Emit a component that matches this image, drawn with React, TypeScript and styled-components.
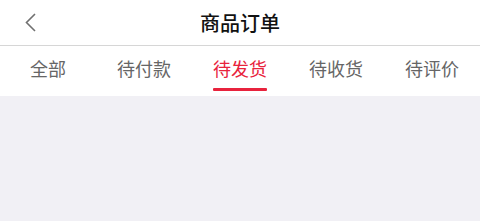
import React, { useState } from "react";
import styled, { createGlobalStyle } from "styled-components";

const Global = createGlobalStyle`
  html, body { margin: 0; padding: 0; background: #f1f0f5; }
  body { font-family: "Noto Sans CJK SC", "Noto Sans", sans-serif; }
`;

const Page = styled.div`
  width: 480px;
  min-height: 221px;
  background: #f1f0f5;
`;

const NavBar = styled.header`
  height: 45px;
  display: grid;
  grid-template-columns: 64px 1fr 64px;
  align-items: center;
  background: #fff;
  border-bottom: 1px solid #d6d6d6;
`;

const BackButton = styled.button`
  border: 0;
  background: none;
  padding: 0 0 0 24px;
  height: 45px;
  display: flex;
  align-items: center;
  color: #666;
`;

const Title = styled.h1`
  margin: 0;
  text-align: center;
  font-size: 20px;
  font-weight: 500;
  color: #111;
  line-height: 40px;
`;

const Tabs = styled.nav`
  height: 50px;
  display: grid;
  grid-template-columns: repeat(5, 1fr);
  background: #fff;
`;

const Tab = styled.div<{ $active: boolean }>`
  position: relative;
  display: flex;
  justify-content: center;
  align-items: flex-start;
  padding-top: 9px;
  font-size: 18px;
  line-height: 26px;
  color: ${(p) => (p.$active ? "#e8233d" : "#666")};
`;

const Underline = styled.span`
  position: absolute;
  left: 50%;
  transform: translateX(-50%);
  top: 42px;
  width: 54px;
  height: 3px;
  border-radius: 1px;
  background: #e8233d;
`;

const tabs = ["全部", "待付款", "待发货", "待收货", "待评价"];

export default function App() {
  const [active, setActive] = useState(2);
  return (
    <Page>
      <Global />
      <NavBar>
        <BackButton aria-label="back">
          <svg width="13" height="20" viewBox="0 0 13 20" fill="none">
            <path d="M11 1 L2.5 9.5 L11 18" stroke="#707070" strokeWidth="1.6" />
          </svg>
        </BackButton>
        <Title>商品订单</Title>
        <span />
      </NavBar>
      <Tabs>
        {tabs.map((t, i) => (
          <Tab key={t} $active={i === active} onClick={() => setActive(i)}>
            {t}
            {i === active && <Underline />}
          </Tab>
        ))}
      </Tabs>
    </Page>
  );
}
